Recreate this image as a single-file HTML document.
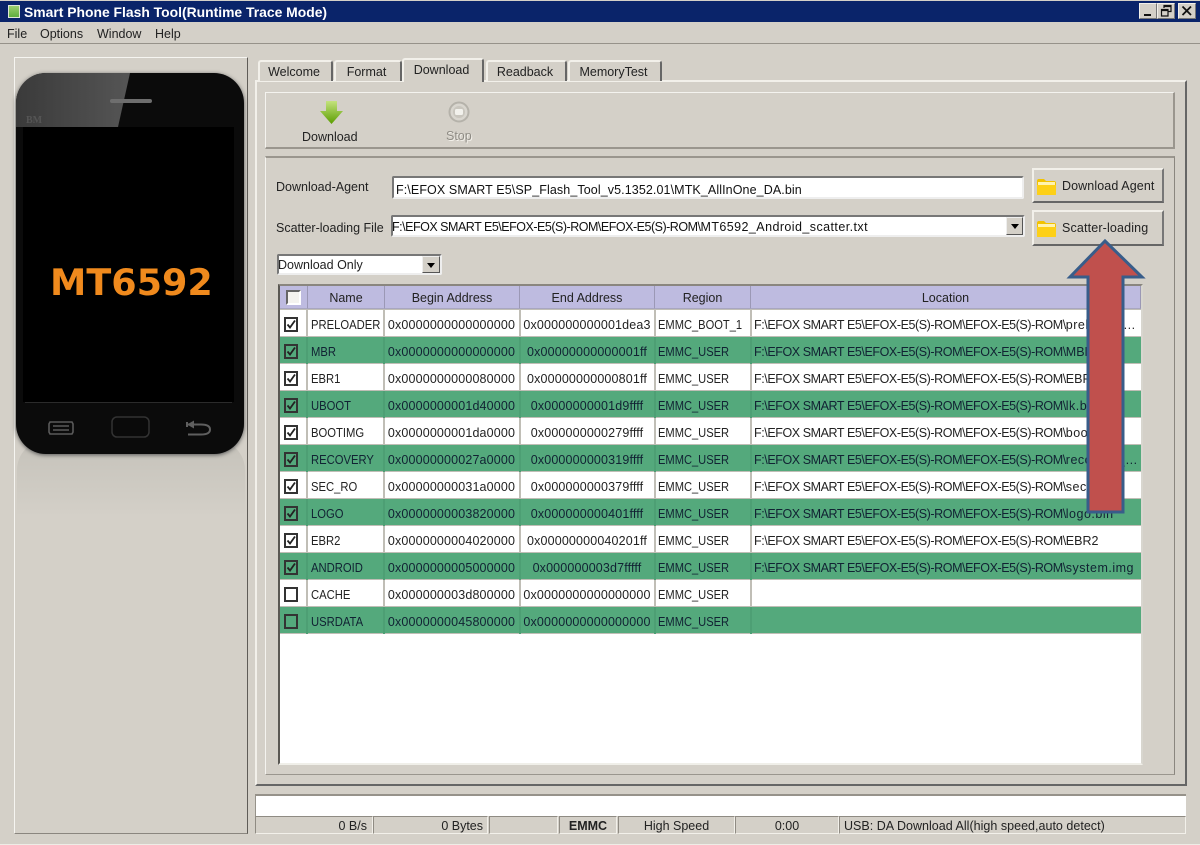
<!DOCTYPE html>
<html><head><meta charset="utf-8"><style>
html,body{margin:0;padding:0}
body{width:1200px;height:845px;position:relative;overflow:hidden;background:#d4d0c8;font:12.5px "Liberation Sans",sans-serif;color:#222;filter:blur(.3px)}
div,span.a,svg{position:absolute}
.t{white-space:nowrap;line-height:16px;height:16px}
.up{box-sizing:border-box;border:2px solid;border-color:#f2f0ea #777 #777 #f2f0ea;background:#d4d0c8}
.tab{box-sizing:border-box;background:#d4d0c8;border:2px solid;border-color:#f2f0ea #666 transparent #f2f0ea;border-bottom:0;border-radius:3px 3px 0 0;text-align:center;line-height:20px;font-size:12.5px;padding-right:3px}
.in{box-sizing:border-box;background:#fff;border:2px solid;border-color:#777 #eee #eee #777;border-radius:2px}
.dd{box-sizing:border-box;background:#d4d0c8;border:1px solid;border-color:#eee #555 #555 #eee}
.dd:after{content:"";position:absolute;left:4px;top:6px;border:4px solid transparent;border-top:5px solid #000;border-bottom:0}
.h{top:286px;height:23px;background:#bebbe0;box-sizing:border-box;border-right:1px solid #9b98b5;border-bottom:1px solid #a8a6c0;text-align:center;line-height:24px}
.r{left:280px;width:861px;height:26px;background:#fff}
.g{background:#54a97c;color:#123}
.r div{top:7px;white-space:nowrap;line-height:16px}
.r .v{top:0;width:2px;height:27px;background:#c0beb6}
.g .v{background:#4d9f74}
.c{left:4px;top:7px!important;width:14px;height:15px;box-sizing:border-box;border:2px solid #333;background:transparent}
.n{left:31px;transform:scaleX(.9);transform-origin:0 0}.b{left:104px;width:135px;text-align:center;letter-spacing:.15px}.e{left:240px;width:134px;text-align:center;letter-spacing:.15px}.re{left:378px;transform:scaleX(.89);transform-origin:0 0}
.l{left:474px;width:384px;overflow:hidden;text-overflow:ellipsis;letter-spacing:-.42px}
.s{letter-spacing:.5px}.s0{letter-spacing:0}
.st{box-sizing:border-box;top:816px;height:18px;border:1px solid;border-color:#8f8b83 #f2f0ea #f2f0ea #8f8b83;line-height:18px;white-space:nowrap}
.c svg{left:0;top:0}
</style></head><body>

<!-- title bar -->
<div style="left:0;top:1px;width:1200px;height:21px;background:#0a246a"></div>
<div style="left:8px;top:5px;width:12px;height:13px;background:linear-gradient(#9bd06f,#5fae3f);border:1px solid #dfe7d8;box-sizing:border-box"></div>
<div class="t" style="left:24px;top:4px;color:#fff;font-weight:bold;font-size:13.9px">Smart Phone Flash Tool(Runtime Trace Mode)</div>
<div class="up" style="left:1139px;top:3px;width:18px;height:16px;border-width:1px"><div style="left:4px;top:10px;width:7px;height:2px;background:#111"></div></div>
<div class="up" style="left:1157px;top:3px;width:18px;height:16px;border-width:1px"><svg width="16" height="14" style="left:0;top:0"><path d="M6 4V1.5h7v6h-3M3.5 5.5h6.500v6.500h-6.500z M3.500 6.500h6.500M6 2.500h7" fill="none" stroke="#111" stroke-width="1.200"/></svg></div>
<div class="up" style="left:1178px;top:3px;width:18px;height:16px;border-width:1px"><svg width="16" height="14" style="left:0;top:0"><path d="M3.500 2.500l8.500 8.500M12 2.500l-8.500 8.500" stroke="#111" stroke-width="1.800" fill="none"/></svg></div>

<!-- menu -->
<div class="t" style="left:7px;top:26px">File</div>
<div class="t" style="left:40px;top:26px">Options</div>
<div class="t" style="left:97px;top:26px">Window</div>
<div class="t" style="left:155px;top:26px">Help</div>
<div style="left:0;top:43px;width:1200px;height:1px;background:#96928a"></div>

<!-- left panel -->
<div style="left:14px;top:57px;width:234px;height:777px;box-sizing:border-box;border:1px solid;border-color:#f6f5f1 #5f5c57 #8a867f #f6f5f1"></div>
<div style="left:17px;top:440px;width:228px;height:110px;border-radius:30px;background:linear-gradient(#c5c2ba,#d4d0c8 70%)"></div>

<!-- phone -->
<div style="left:16px;top:73px;width:228px;height:381px;border-radius:30px;background:#0b0b0b;box-shadow:0 1px 4px #555;overflow:hidden">
  <svg width="228" height="381" style="left:0;top:0">
    <defs><linearGradient id="gl" x1="0" x2="1" y1="0" y2="0"><stop offset="0" stop-color="#3a3a3a"/><stop offset="1" stop-color="#555"/></linearGradient></defs>
    <path d="M0 0H114L102 54H0z" fill="url(#gl)"/>
    <rect x="94" y="26" width="42" height="4" rx="2" fill="#6e6e6e"/>
    <rect x="7" y="54" width="211" height="275" fill="#000"/>
    <rect x="9" y="329" width="207" height="1" fill="#2b2b2b"/>
    <text x="10" y="50" font-family="Liberation Serif" font-size="10" fill="#555" font-weight="bold">BM</text>
    <rect x="96" y="344" width="37" height="20" rx="5" fill="#0a0a0a" stroke="#333" stroke-width="1.500"/>
    <path d="M34 349h22l1 2v8l-1 2H34l-1-2v-8z M37 353h16M37 357h16" fill="none" stroke="#5a5a5a" stroke-width="1.600"/>
    <path d="M171 349v5M171 351.500h14q9 0 9 5t-9 5h-13" fill="none" stroke="#5f5f5f" stroke-width="2"/>
    <path d="M171 351.500l7-4v8z" fill="#5f5f5f"/>
  </svg>
</div>
<div class="t" style="left:50px;top:265px;height:36px;line-height:36px;color:#f08a1d;font-family:'DejaVu Sans',sans-serif;font-weight:bold;font-size:36.5px">MT6592</div>

<!-- tab widget -->
<div style="left:255px;top:80px;width:932px;height:706px;box-sizing:border-box;border:2px solid;border-color:#f2f0ea #666 #666 #f2f0ea"></div>
<div class="tab" style="left:258px;top:60px;width:75px;height:21px">Welcome</div>
<div class="tab" style="left:334px;top:60px;width:68px;height:21px">Format</div>
<div class="tab" style="left:402px;top:58px;width:82px;height:24px">Download</div>
<div class="tab" style="left:486px;top:60px;width:81px;height:21px">Readback</div>
<div class="tab" style="left:568px;top:60px;width:94px;height:21px">MemoryTest</div>

<!-- toolbar -->
<div style="left:265px;top:92px;width:910px;height:57px;box-sizing:border-box;border:1px solid;border-bottom-width:2px;border-right-width:2px;border-color:#f4f3ef #9a968e #9a968e #f4f3ef"></div>
<svg width="26" height="26" style="left:319px;top:100px"><defs><linearGradient id="ar" x1="0" x2="0" y1="0" y2="1"><stop offset="0" stop-color="#c4e37e"/><stop offset="1" stop-color="#5b9e00"/></linearGradient></defs><path d="M7 1h11v10h6L12.500 24 1 11h6z" fill="url(#ar)"/></svg>
<div class="t" style="left:302px;top:129px">Download</div>
<svg width="24" height="24" style="left:447px;top:100px"><circle cx="12" cy="12" r="9.500" fill="#d9d6cf" stroke="#b5b2aa" stroke-width="2"/><circle cx="12" cy="12" r="6" fill="#c9c6be"/><rect x="8" y="9" width="8" height="6" rx="1.500" fill="#f2f1ec"/></svg>
<div class="t" style="left:446px;top:128px;color:#8f8c85;text-shadow:1px 1px 0 #f2f0ea">Stop</div>

<!-- main panel -->
<div style="left:265px;top:156px;width:910px;height:619px;box-sizing:border-box;border:1px solid;border-color:#9a968e #9a968e #9a968e #f4f3ef;border-top-width:2px;border-right-color:#8a867f"></div>
<div class="t" style="left:276px;top:179px">Download-Agent</div>
<div class="t" style="left:276px;top:220px">Scatter-loading File</div>

<div class="in" style="left:392px;top:176px;width:632px;height:23px"></div>
<div class="t" style="left:396px;top:182px;color:#111;letter-spacing:.1px">F:\EFOX SMART E5\SP_Flash_Tool_v5.1352.01\MTK_AllInOne_DA.bin</div>
<div class="in" style="left:391px;top:215px;width:634px;height:22px"></div>
<div class="t" style="left:392px;top:219px;color:#111;letter-spacing:-.49px">F:\EFOX SMART E5\EFOX-E5(S)-ROM\EFOX-E5(S)-ROM\<span style="letter-spacing:.43px">MT6592_Android_scatter.txt</span></div>
<div class="dd" style="left:1006px;top:217px;width:17px;height:18px"></div>

<div class="up" style="left:1032px;top:168px;width:132px;height:35px;border-color:#f2f0ea #777 #666 #f2f0ea"></div>
<div class="up" style="left:1032px;top:210px;width:132px;height:36px;border-color:#f2f0ea #777 #666 #f2f0ea"></div>
<svg width="21" height="20" style="left:1036px;top:177px"><path d="M1 4q0-2 2-2h5l2 2h8q2 0 2 2v11q0 1-1 1H2q-1 0-1-1z" fill="#f2c200"/><path d="M2 5h17v3H2z" fill="#fff3b0"/><path d="M1 8h19v9q0 1-1 1H2q-1 0-1-1z" fill="#fdd017"/></svg>
<div class="t" style="left:1062px;top:178px;letter-spacing:.1px">Download Agent</div>
<svg width="21" height="20" style="left:1036px;top:219px"><path d="M1 4q0-2 2-2h5l2 2h8q2 0 2 2v11q0 1-1 1H2q-1 0-1-1z" fill="#f2c200"/><path d="M2 5h17v3H2z" fill="#fff3b0"/><path d="M1 8h19v9q0 1-1 1H2q-1 0-1-1z" fill="#fdd017"/></svg>
<div class="t" style="left:1062px;top:220px;letter-spacing:.15px">Scatter-loading</div>

<div class="in" style="left:277px;top:254px;width:165px;height:21px"></div>
<div class="t" style="left:278px;top:257px">Download Only</div>
<div class="dd" style="left:422px;top:256px;width:18px;height:17px"></div>

<!-- table -->
<div style="left:278px;top:284px;width:865px;height:481px;box-sizing:border-box;background:#fff;border:2px solid;border-color:#8a867f #d8d6cf #f0efe9 #5a5853"></div>
<div style="left:280px;top:309px;width:861px;height:325px;background:#c0beb6"></div>
<div class="h" style="left:280px;width:28px"></div>
<div style="left:286px;top:290px;width:15px;height:15px;box-sizing:border-box;background:#f4f3ef;border:2px solid;border-color:#666 #fff #fff #666"></div>
<div class="h" style="left:308px;width:77px">Name</div>
<div class="h" style="left:385px;width:135px">Begin Address</div>
<div class="h" style="left:520px;width:135px">End Address</div>
<div class="h" style="left:655px;width:96px">Region</div>
<div class="h" style="left:751px;width:390px">Location</div>

<div class="r" style="top:310px"><div class="c"><svg width="11" height="11"><path d="M1.500 5.500l2.500 3 5-7" fill="none" stroke="#222" stroke-width="1.800"/></svg></div><div class="v" style="left:26px"></div><div class="v" style="left:103px"></div><div class="v" style="left:239px"></div><div class="v" style="left:374px"></div><div class="v" style="left:470px"></div><div class="n">PRELOADER</div><div class="b">0x0000000000000000</div><div class="e">0x000000000001dea3</div><div class="re">EMMC_BOOT_1</div><div class="l">F:\EFOX SMART E5\EFOX-E5(S)-ROM\EFOX-E5(S)-ROM\<span class="s">preloader_mt6592.bin</span></div></div>
<div class="r g" style="top:337px"><div class="c"><svg width="11" height="11"><path d="M1.500 5.500l2.500 3 5-7" fill="none" stroke="#222" stroke-width="1.800"/></svg></div><div class="v" style="left:26px"></div><div class="v" style="left:103px"></div><div class="v" style="left:239px"></div><div class="v" style="left:374px"></div><div class="v" style="left:470px"></div><div class="n">MBR</div><div class="b">0x0000000000000000</div><div class="e">0x00000000000001ff</div><div class="re">EMMC_USER</div><div class="l">F:\EFOX SMART E5\EFOX-E5(S)-ROM\EFOX-E5(S)-ROM\<span class="s0">MBR</span></div></div>
<div class="r" style="top:364px"><div class="c"><svg width="11" height="11"><path d="M1.500 5.500l2.500 3 5-7" fill="none" stroke="#222" stroke-width="1.800"/></svg></div><div class="v" style="left:26px"></div><div class="v" style="left:103px"></div><div class="v" style="left:239px"></div><div class="v" style="left:374px"></div><div class="v" style="left:470px"></div><div class="n">EBR1</div><div class="b">0x0000000000080000</div><div class="e">0x00000000000801ff</div><div class="re">EMMC_USER</div><div class="l">F:\EFOX SMART E5\EFOX-E5(S)-ROM\EFOX-E5(S)-ROM\<span class="s0">EBR1</span></div></div>
<div class="r g" style="top:391px"><div class="c"><svg width="11" height="11"><path d="M1.500 5.500l2.500 3 5-7" fill="none" stroke="#222" stroke-width="1.800"/></svg></div><div class="v" style="left:26px"></div><div class="v" style="left:103px"></div><div class="v" style="left:239px"></div><div class="v" style="left:374px"></div><div class="v" style="left:470px"></div><div class="n">UBOOT</div><div class="b">0x0000000001d40000</div><div class="e">0x0000000001d9ffff</div><div class="re">EMMC_USER</div><div class="l">F:\EFOX SMART E5\EFOX-E5(S)-ROM\EFOX-E5(S)-ROM\<span class="s">lk.bin</span></div></div>
<div class="r" style="top:418px"><div class="c"><svg width="11" height="11"><path d="M1.500 5.500l2.500 3 5-7" fill="none" stroke="#222" stroke-width="1.800"/></svg></div><div class="v" style="left:26px"></div><div class="v" style="left:103px"></div><div class="v" style="left:239px"></div><div class="v" style="left:374px"></div><div class="v" style="left:470px"></div><div class="n">BOOTIMG</div><div class="b">0x0000000001da0000</div><div class="e">0x000000000279ffff</div><div class="re">EMMC_USER</div><div class="l">F:\EFOX SMART E5\EFOX-E5(S)-ROM\EFOX-E5(S)-ROM\<span class="s">boot.img</span></div></div>
<div class="r g" style="top:445px"><div class="c"><svg width="11" height="11"><path d="M1.500 5.500l2.500 3 5-7" fill="none" stroke="#222" stroke-width="1.800"/></svg></div><div class="v" style="left:26px"></div><div class="v" style="left:103px"></div><div class="v" style="left:239px"></div><div class="v" style="left:374px"></div><div class="v" style="left:470px"></div><div class="n">RECOVERY</div><div class="b">0x00000000027a0000</div><div class="e">0x000000000319ffff</div><div class="re">EMMC_USER</div><div class="l">F:\EFOX SMART E5\EFOX-E5(S)-ROM\EFOX-E5(S)-ROM\<span class="s">recovery_image.img</span></div></div>
<div class="r" style="top:472px"><div class="c"><svg width="11" height="11"><path d="M1.500 5.500l2.500 3 5-7" fill="none" stroke="#222" stroke-width="1.800"/></svg></div><div class="v" style="left:26px"></div><div class="v" style="left:103px"></div><div class="v" style="left:239px"></div><div class="v" style="left:374px"></div><div class="v" style="left:470px"></div><div class="n">SEC_RO</div><div class="b">0x00000000031a0000</div><div class="e">0x000000000379ffff</div><div class="re">EMMC_USER</div><div class="l">F:\EFOX SMART E5\EFOX-E5(S)-ROM\EFOX-E5(S)-ROM\<span class="s">secro.img</span></div></div>
<div class="r g" style="top:499px"><div class="c"><svg width="11" height="11"><path d="M1.500 5.500l2.500 3 5-7" fill="none" stroke="#222" stroke-width="1.800"/></svg></div><div class="v" style="left:26px"></div><div class="v" style="left:103px"></div><div class="v" style="left:239px"></div><div class="v" style="left:374px"></div><div class="v" style="left:470px"></div><div class="n">LOGO</div><div class="b">0x0000000003820000</div><div class="e">0x000000000401ffff</div><div class="re">EMMC_USER</div><div class="l">F:\EFOX SMART E5\EFOX-E5(S)-ROM\EFOX-E5(S)-ROM\<span class="s">logo.bin</span></div></div>
<div class="r" style="top:526px"><div class="c"><svg width="11" height="11"><path d="M1.500 5.500l2.500 3 5-7" fill="none" stroke="#222" stroke-width="1.800"/></svg></div><div class="v" style="left:26px"></div><div class="v" style="left:103px"></div><div class="v" style="left:239px"></div><div class="v" style="left:374px"></div><div class="v" style="left:470px"></div><div class="n">EBR2</div><div class="b">0x0000000004020000</div><div class="e">0x00000000040201ff</div><div class="re">EMMC_USER</div><div class="l">F:\EFOX SMART E5\EFOX-E5(S)-ROM\EFOX-E5(S)-ROM\<span class="s0">EBR2</span></div></div>
<div class="r g" style="top:553px"><div class="c"><svg width="11" height="11"><path d="M1.500 5.500l2.500 3 5-7" fill="none" stroke="#222" stroke-width="1.800"/></svg></div><div class="v" style="left:26px"></div><div class="v" style="left:103px"></div><div class="v" style="left:239px"></div><div class="v" style="left:374px"></div><div class="v" style="left:470px"></div><div class="n">ANDROID</div><div class="b">0x0000000005000000</div><div class="e">0x000000003d7fffff</div><div class="re">EMMC_USER</div><div class="l">F:\EFOX SMART E5\EFOX-E5(S)-ROM\EFOX-E5(S)-ROM\<span class="s">system.img</span></div></div>
<div class="r" style="top:580px"><div class="c"></div><div class="v" style="left:26px"></div><div class="v" style="left:103px"></div><div class="v" style="left:239px"></div><div class="v" style="left:374px"></div><div class="v" style="left:470px"></div><div class="n">CACHE</div><div class="b">0x000000003d800000</div><div class="e">0x0000000000000000</div><div class="re">EMMC_USER</div></div>
<div class="r g" style="top:607px"><div class="c"></div><div class="v" style="left:26px"></div><div class="v" style="left:103px"></div><div class="v" style="left:239px"></div><div class="v" style="left:374px"></div><div class="v" style="left:470px"></div><div class="n">USRDATA</div><div class="b">0x0000000045800000</div><div class="e">0x0000000000000000</div><div class="re">EMMC_USER</div></div>

<!-- red arrow -->
<svg width="90" height="290" style="left:1060px;top:235px"><path d="M45 6L82 42H63V277H28V42H10z" fill="#c0504d" stroke="#385d8a" stroke-width="3"/></svg>

<!-- status -->
<div style="left:255px;top:794px;width:931px;height:22px;box-sizing:border-box;background:#fff;border-top:2px solid #96928a;border-left:1px solid #96928a"></div>
<div class="st" style="left:255px;width:118px;text-align:right;padding-right:5px">0 B/s</div>
<div class="st" style="left:373px;width:115px;text-align:right;padding-right:4px">0 Bytes</div>
<div class="st" style="left:489px;width:69px"></div>
<div class="st" style="left:559px;width:58px;text-align:center;font-weight:bold;font-size:12.5px">EMMC</div>
<div class="st" style="left:618px;width:117px;text-align:center">High Speed</div>
<div class="st" style="left:735px;width:104px;text-align:center">0:00</div>
<div class="st" style="left:839px;width:347px;padding-left:4px;letter-spacing:.02px">USB: DA Download All(high speed,auto detect)</div>
<div style="left:0;top:844px;width:1200px;height:1px;background:#eeece6"></div>
</body></html>
